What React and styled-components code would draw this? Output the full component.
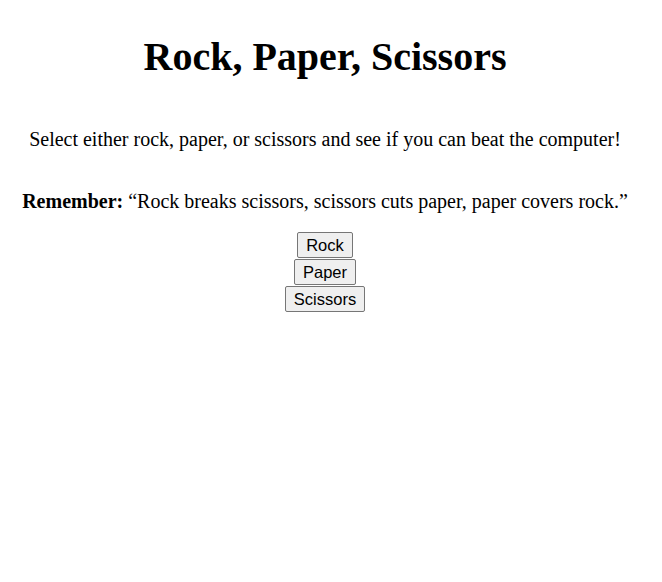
import React from "react";
import styled, { createGlobalStyle } from "styled-components";

const Global = createGlobalStyle`
  body {
    margin: 8px;
    background: #ffffff;
    color: #000000;
    font-family: "Liberation Serif", "Times New Roman", serif;
  }
`;

const Page = styled.main`
  display: flex;
  flex-direction: column;
  align-items: center;
  text-align: center;
  padding: 26px 12px 0 0;
`;

const Title = styled.h1`
  font-size: 40px;
  font-weight: bold;
  line-height: 46px;
  margin: 0 0 48px;
`;

const Text = styled.p`
  font-size: 20px;
  line-height: 23px;
  margin: 0 0 ${(p) => p.gap}px;
`;

const Choices = styled.div`
  display: flex;
  flex-direction: column;
  align-items: center;
  gap: 1px;
`;

const ChoiceButton = styled.button`
  font-family: "Liberation Sans", Arial, sans-serif;
  font-size: 16.5px;
  line-height: 19px;
  color: #000000;
  background: #efefef;
  border: 1px solid #767676;
  border-radius: 2px;
  padding: 2.5px 8px;
`;

export default function App() {
  const choices = ["Rock", "Paper", "Scissors"];

  return (
    <>
      <Global />
      <Page>
        <Title>Rock, Paper, Scissors</Title>
        <Text gap={39}>
          Select either rock, paper, or scissors and see if you can beat the computer!
        </Text>
        <Text gap={19}>
          <b>Remember:</b> “Rock breaks scissors, scissors cuts paper, paper covers rock.”
        </Text>
        <Choices>
          {choices.map((c) => (
            <ChoiceButton key={c}>{c}</ChoiceButton>
          ))}
        </Choices>
      </Page>
    </>
  );
}
